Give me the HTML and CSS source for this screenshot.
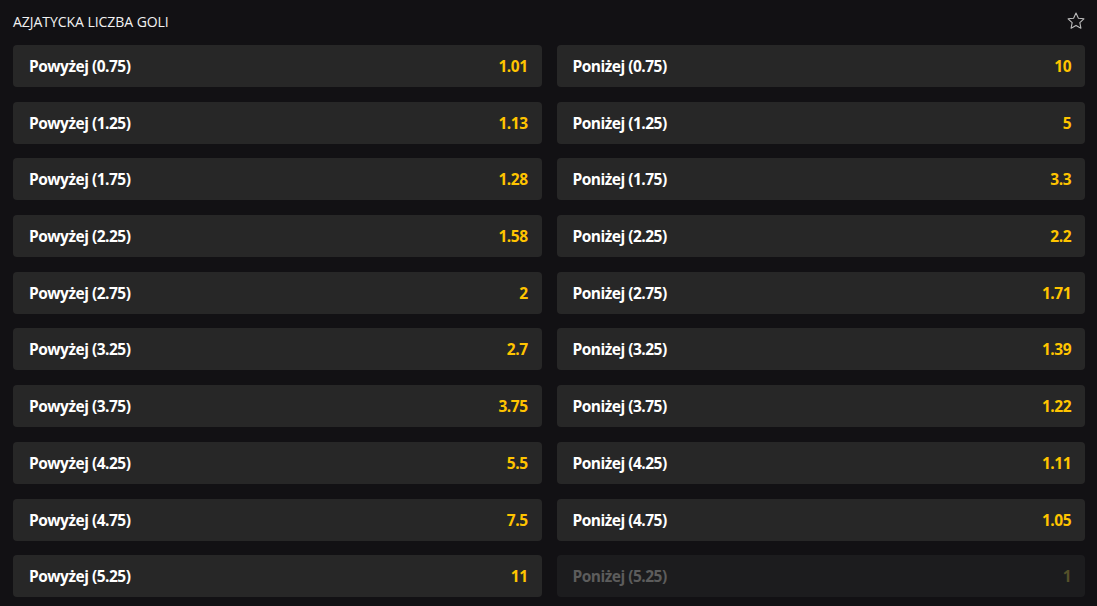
FILE: index.html
```html
<!DOCTYPE html>
<html lang="pl">
<head>
    <meta charset="UTF-8">
    <title>Azjatycka liczba goli</title>
    <link rel="stylesheet" href="styles.css">
</head>
<body>
    <div class="market">
        <div class="market-header">
            <span class="market-title">AZJATYCKA LICZBA GOLI</span>
            <svg class="fav" width="20" height="20" viewBox="0 0 24 24">
                <path d="M12 2.5l2.9 6.1 6.6.8-4.9 4.6 1.3 6.6L12 17.3l-5.9 3.3 1.3-6.6-4.9-4.6 6.6-.8z" fill="none" stroke="#bdbdbd" stroke-width="1.3" stroke-linejoin="round"/>
            </svg>
        </div>
        <div class="odds-grid">
            <div class="odd"><span class="label">Powyżej (0.75)</span><span class="price">1.01</span></div>
            <div class="odd"><span class="label">Poniżej (0.75)</span><span class="price">10</span></div>
            <div class="odd"><span class="label">Powyżej (1.25)</span><span class="price">1.13</span></div>
            <div class="odd"><span class="label">Poniżej (1.25)</span><span class="price">5</span></div>
            <div class="odd"><span class="label">Powyżej (1.75)</span><span class="price">1.28</span></div>
            <div class="odd"><span class="label">Poniżej (1.75)</span><span class="price">3.3</span></div>
            <div class="odd"><span class="label">Powyżej (2.25)</span><span class="price">1.58</span></div>
            <div class="odd"><span class="label">Poniżej (2.25)</span><span class="price">2.2</span></div>
            <div class="odd"><span class="label">Powyżej (2.75)</span><span class="price">2</span></div>
            <div class="odd"><span class="label">Poniżej (2.75)</span><span class="price">1.71</span></div>
            <div class="odd"><span class="label">Powyżej (3.25)</span><span class="price">2.7</span></div>
            <div class="odd"><span class="label">Poniżej (3.25)</span><span class="price">1.39</span></div>
            <div class="odd"><span class="label">Powyżej (3.75)</span><span class="price">3.75</span></div>
            <div class="odd"><span class="label">Poniżej (3.75)</span><span class="price">1.22</span></div>
            <div class="odd"><span class="label">Powyżej (4.25)</span><span class="price">5.5</span></div>
            <div class="odd"><span class="label">Poniżej (4.25)</span><span class="price">1.11</span></div>
            <div class="odd"><span class="label">Powyżej (4.75)</span><span class="price">7.5</span></div>
            <div class="odd"><span class="label">Poniżej (4.75)</span><span class="price">1.05</span></div>
            <div class="odd"><span class="label">Powyżej (5.25)</span><span class="price">11</span></div>
            <div class="odd disabled"><span class="label">Poniżej (5.25)</span><span class="price">1</span></div>
        </div>
    </div>
</body>
</html>
```

FILE: styles.css
```css
body {
    margin: 0;
    padding: 0;
    background-color: #121114;
    font-family: "Open Sans", Arial, sans-serif;
    color: #fff;
}

.market {
    padding: 0 12px 0 13px;
}

.market-header {
    height: 45px;
    display: flex;
    justify-content: space-between;
    align-items: center;
    padding-bottom: 3px;
    box-sizing: border-box;
}

.market-title {
    font-size: 14px;
    letter-spacing: -0.05px;
    color: #f2f2f2;
}

.fav {
    margin-right: -1px;
}

.odds-grid {
    display: grid;
    grid-template-columns: 1fr 1fr;
    column-gap: 15px;
    row-gap: 14.7px;
}

.odd {
    height: 42px;
    background-color: #272727;
    border-radius: 4px;
    display: flex;
    justify-content: space-between;
    align-items: center;
    padding: 0 14px 0 16px;
    font-size: 15.5px;
    font-weight: 700;
    letter-spacing: -0.5px;
}

.label {
    color: #fff;
}

.price {
    color: #ffc400;
}

.odd.disabled {
    background-color: #1c1c1e;
}

.odd.disabled .label {
    color: #5c5c5c;
}

.odd.disabled .price {
    color: #55502a;
}
```
